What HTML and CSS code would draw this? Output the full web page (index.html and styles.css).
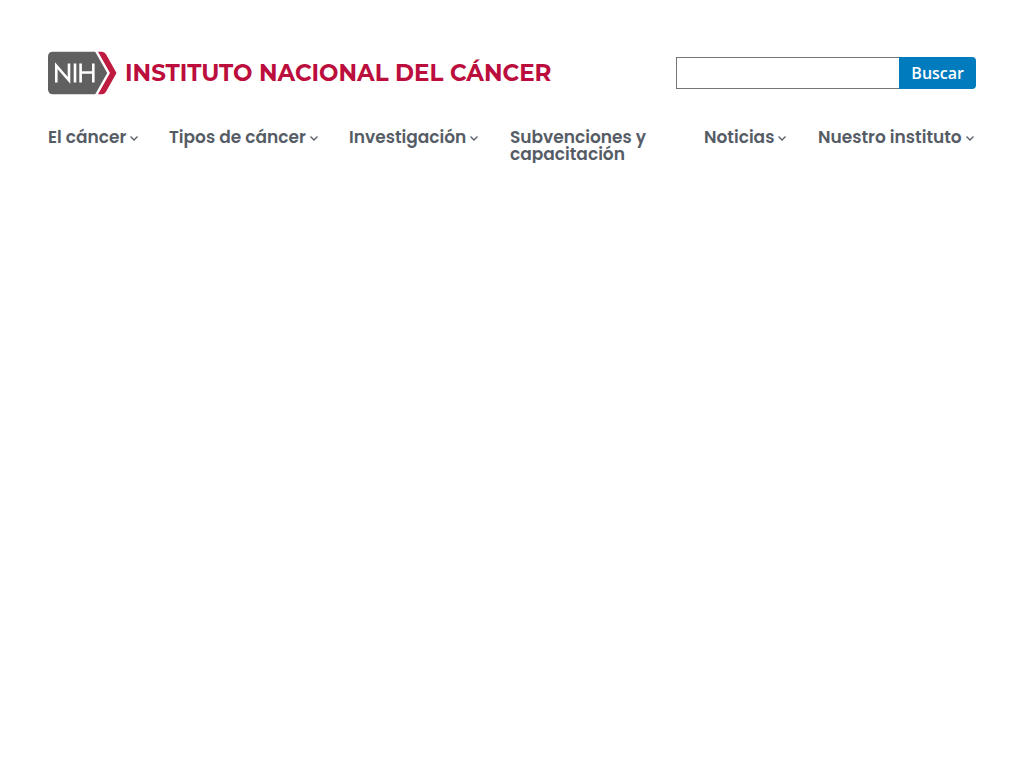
FILE: index.html
```html
<!DOCTYPE html>
<html lang="es">
<head>
<meta charset="utf-8">
<meta name="viewport" content="width=device-width, initial-scale=1">
<title>Instituto Nacional del Cáncer</title>
<link rel="stylesheet" href="styles.css">
</head>
<body>
<header class="header">
  <div class="masthead">
    <a class="logo" href="#" aria-label="Instituto Nacional del Cáncer">
      <svg class="logo-mark" viewBox="0 0 69 44" aria-hidden="true">
        <path fill="#606060" d="M5 .7H47.200L59.200 22L47.200 43.300H5Q0 43.300 0 38.300V5.700Q0 .7 5 .7Z"/>
        <path fill="#bf1b40" d="M50 .7H54Q56.500 .7 58 3.200L68.500 22L58 40.800Q56.500 43.300 54 43.300H50L62 22Z"/>
        <path fill="none" stroke="#fff" stroke-width="2.600" d="M8.300 31.500V14.700L21 29.300V12.500M27 12.500V31.500M32.600 12.500V31.500M45.300 12.500V31.500M32.600 21.500H45.300"/>
      </svg>
      <span class="logo-text">INSTITUTO NACIONAL DEL CÁNCER</span>
    </a>
    <form class="search" role="search">
      <input class="search-input" type="search" aria-label="Buscar">
      <button class="search-button" type="submit">Buscar</button>
    </form>
  </div>
  <nav class="nav" aria-label="Principal">
    <button class="nav-item" type="button">El cáncer<svg class="chevron" viewBox="0 0 8 6" aria-hidden="true"><path d="M.5 1.500L4 5L7.500 1.500"/></svg></button>
    <button class="nav-item" type="button">Tipos de cáncer<svg class="chevron" viewBox="0 0 8 6" aria-hidden="true"><path d="M.5 1.500L4 5L7.500 1.500"/></svg></button>
    <button class="nav-item" type="button">Investigación<svg class="chevron" viewBox="0 0 8 6" aria-hidden="true"><path d="M.5 1.500L4 5L7.500 1.500"/></svg></button>
    <a class="nav-item nav-item-wrap" href="#">Subvenciones y capacitación</a>
    <button class="nav-item" type="button">Noticias<svg class="chevron" viewBox="0 0 8 6" aria-hidden="true"><path d="M.5 1.500L4 5L7.500 1.500"/></svg></button>
    <button class="nav-item" type="button">Nuestro instituto<svg class="chevron" viewBox="0 0 8 6" aria-hidden="true"><path d="M.5 1.500L4 5L7.500 1.500"/></svg></button>
  </nav>
</header>
</body>
</html>
```

FILE: styles.css
```css
* { box-sizing: border-box; }

body {
  margin: 0;
  background: #fff;
  font-family: "Open Sans", sans-serif;
}

.header { padding: 51px 48px 0; }

.masthead {
  display: flex;
  align-items: center;
  justify-content: space-between;
  gap: 32px;
}

.logo {
  display: flex;
  align-items: center;
  gap: 8px;
  text-decoration: none;
  color: #bb0e3d;
}

.logo-mark { width: 69px; height: 44px; flex: none; }

.logo-text {
  font: 700 23px/44px Montserrat, Inter, sans-serif;
  white-space: nowrap;
}

.search { display: flex; width: 300px; }

.search-input {
  flex: 1;
  min-width: 0;
  height: 32px;
  padding: 0 8px;
  border: 1px solid #71767a;
  border-right: 0;
  border-radius: 0;
  background: #fff;
  font: 16px "Open Sans", sans-serif;
  appearance: none;
}

.search-button {
  height: 32px;
  padding: 0 12px;
  border: 0;
  border-radius: 0 4px 4px 0;
  background: #007bbd;
  color: #fff;
  font: 600 16px/32px "Open Sans", sans-serif;
}

.nav {
  display: grid;
  grid-template-columns: 89fr 148fr 129fr 162fr 82fr 158fr;
  align-items: start;
  gap: 32px;
  margin-top: 34px;
}

.nav-item {
  display: flex;
  align-items: center;
  min-width: 0;
  gap: 4px;
  padding: 0;
  border: 0;
  background: none;
  color: #565c65;
  font: 600 17px/17px Poppins, Inter, sans-serif;
  text-align: left;
  text-decoration: none;
  text-rendering: optimizeSpeed;
  white-space: nowrap;
}

.nav-item-wrap { white-space: normal; }

.chevron {
  width: 8px;
  height: 6px;
  flex: none;
  overflow: visible;
  fill: none;
  stroke: #565c65;
  stroke-width: 1.3;
}
```
